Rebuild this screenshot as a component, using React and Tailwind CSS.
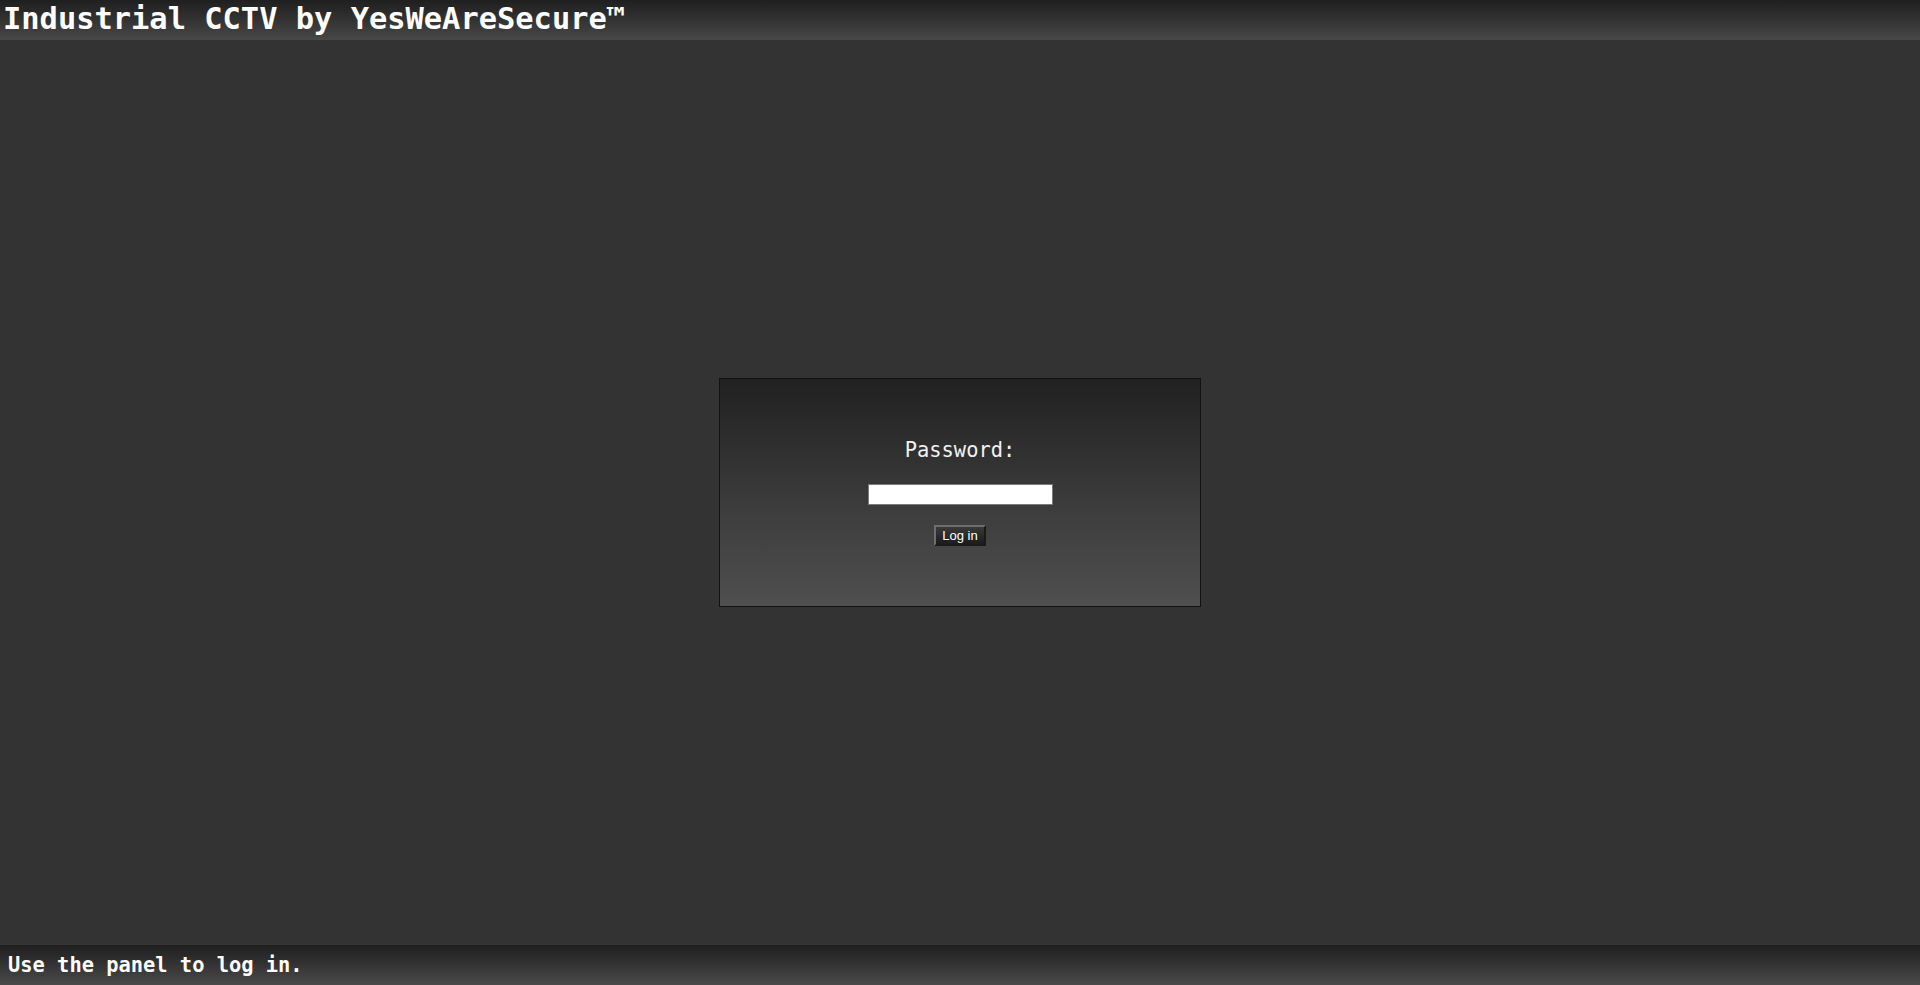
// Login screen for an industrial CCTV console: top banner, a centred
// password panel, and a status strip at the bottom.

const mono = "font-['DejaVu_Sans_Mono','Liberation_Mono',monospace]";

const App = () => {
    return (
        <div className="flex h-screen flex-col bg-[#333333] text-white">
            {/* Title bar */}
            <header
                className={`h-10 shrink-0 bg-gradient-to-b from-[#1f1f1f] to-[#484848] px-[3px] text-[30.4px] font-bold leading-[38px] text-white ${mono}`}
            >
                Industrial CCTV by YesWeAreSecure™
            </header>

            {/* Login panel */}
            <main className="flex flex-1 items-center justify-center">
                <form
                    className="flex h-[229px] w-[482px] flex-col items-center justify-center border border-[#111111] bg-gradient-to-b from-[#212121] via-[#3e3e3e] via-60% to-[#4f4f4f]"
                    onSubmit={(e) => e.preventDefault()}
                >
                    <label htmlFor="pw" className={`-mt-[2px] text-[20.4px] leading-[24px] text-[#f2f2f2] ${mono}`}>
                        Password:
                    </label>
                    <input
                        id="pw"
                        type="password"
                        className="mt-[22px] h-[21px] w-[185px] border border-[#7a7a7a] bg-white px-[2px] text-[13px] text-black outline-none"
                    />
                    <button
                        type="submit"
                        className="mt-[20px] h-[21px] w-[52px] border-2 border-t-[#6e6e6e] border-l-[#6e6e6e] border-r-[#1a1a1a] border-b-[#1a1a1a] bg-gradient-to-b from-[#3a3a3a] to-[#1c1c1c] font-['Liberation_Sans',Arial,sans-serif] text-[13px] leading-[17px] text-white"
                    >
                        Log in
                    </button>
                </form>
            </main>

            {/* Status bar */}
            <footer
                className={`h-10 shrink-0 bg-gradient-to-b from-[#1f1f1f] to-[#4a4a4a] pl-[8px] text-[20.4px] font-bold leading-[40px] text-white ${mono}`}
            >
                Use the panel to log in.
            </footer>
        </div>
    );
};

export default App;
